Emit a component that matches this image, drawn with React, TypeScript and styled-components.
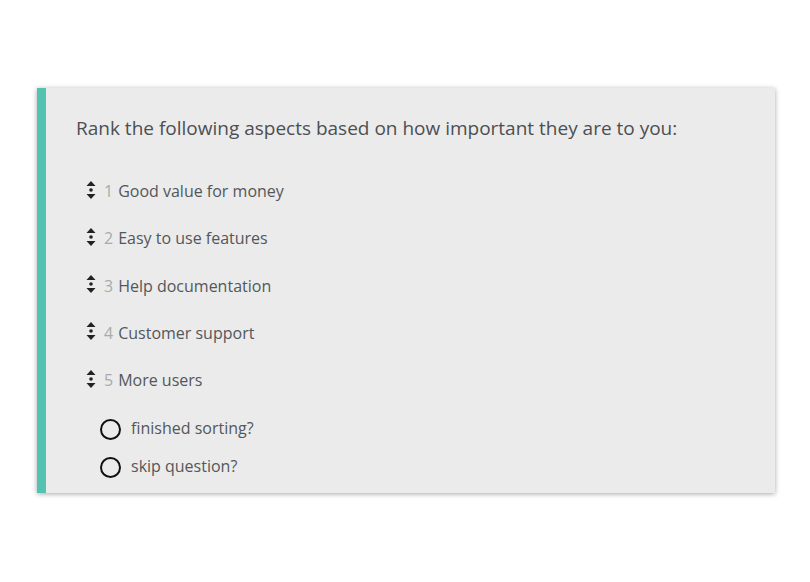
import React from "react";
import styled, { createGlobalStyle } from "styled-components";

const GlobalStyle = createGlobalStyle`
  html, body {
    margin: 0;
    padding: 0;
    background: #ffffff;
    font-family: "Open Sans", "Noto Sans", sans-serif;
  }
`;

const items = [
  "Good value for money",
  "Easy to use features",
  "Help documentation",
  "Customer support",
  "More users",
];

const options = ["finished sorting?", "skip question?"];

const SortIcon = () => (
  <svg width="10" height="18" viewBox="0 0 10 18">
    <polygon points="5,0 9.5,5 0.5,5" fill="#222" />
    <circle cx="5" cy="9" r="1.8" fill="#222" />
    <polygon points="0.5,13 9.5,13 5,18" fill="#222" />
  </svg>
);

export default function App() {
  return (
    <>
      <GlobalStyle />
      <Page>
        <Card>
          <Title>Rank the following aspects based on how important they are to you:</Title>
          <List>
            {items.map((label, i) => (
              <Item key={label}>
                <Handle>
                  <SortIcon />
                </Handle>
                <Num>{i + 1}</Num>
                <Label>{label}</Label>
              </Item>
            ))}
          </List>
          <Options>
            {options.map(o => (
              <Option key={o}>
                <Radio />
                <OptionLabel>{o}</OptionLabel>
              </Option>
            ))}
          </Options>
        </Card>
      </Page>
    </>
  );
}

const Page = styled.div`
  width: 810px;
  height: 582px;
  padding: 88px 35px 0 37px;
  box-sizing: border-box;
`;

const Card = styled.div`
  width: 738px;
  height: 405px;
  box-sizing: border-box;
  background: #ebebeb;
  border-left: 9px solid #53c2b0;
  box-shadow: 0 1px 5px rgba(0, 0, 0, 0.35);
  padding: 26px 20px 0 30px;
`;

const Title = styled.h2`
  margin: 0;
  font-weight: 400;
  font-size: 19px;
  line-height: 28px;
  color: #4d4f52;
`;

const List = styled.div`
  display: flex;
  flex-direction: column;
  gap: 25.3px;
  margin-top: 38px;
  padding-left: 10px;
`;

const Item = styled.div`
  display: flex;
  align-items: center;
  height: 22px;
  font-size: 16px;
`;

const Handle = styled.span`
  display: flex;
  width: 10px;
  margin-right: 8px;
  margin-top: -3px;
`;

const Num = styled.span`
  color: #aaaaaa;
  margin-right: 5px;
`;

const Label = styled.span`
  color: #53575a;
`;

const Options = styled.div`
  display: flex;
  flex-direction: column;
  gap: 16px;
  margin-top: 26px;
  padding-left: 24px;
`;

const Option = styled.div`
  display: flex;
  align-items: center;
  height: 22px;
`;

const Radio = styled.span`
  width: 17px;
  height: 17px;
  border: 2px solid #111;
  border-radius: 50%;
  margin-right: 10px;
  margin-top: 2px;
`;

const OptionLabel = styled.span`
  font-size: 16px;
  color: #53575a;
`;
